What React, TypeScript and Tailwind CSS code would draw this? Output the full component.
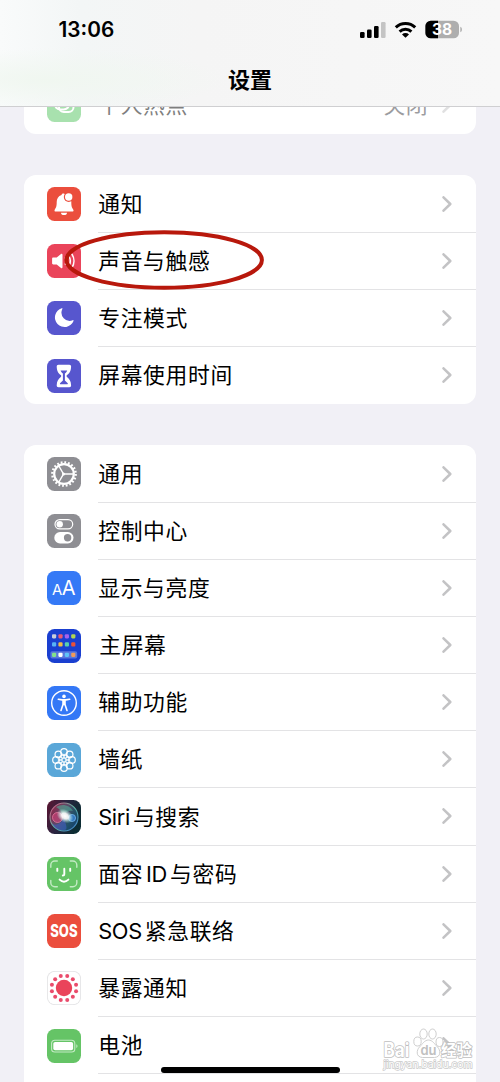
import type { ReactNode } from 'react'
import { clsx } from 'clsx'

interface Item {
  label: ReactNode
  icon: ReactNode
}

interface TileProps {
  bg: string
  children: ReactNode
}

function Tile({ bg, children }: TileProps) {
  return (
    <svg viewBox="0 0 34 34" className="h-[34px] w-[34px] shrink-0">
      <rect width="34" height="34" rx="7.6" fill={bg} />
      {children}
    </svg>
  )
}

const ring = (count: number, radius: number, offset = 0) =>
  Array.from({ length: count }, (_, i) => {
    const a = ((i * 360) / count + offset) * (Math.PI / 180)
    return { x: 17 + radius * Math.cos(a), y: 17 + radius * Math.sin(a) }
  })

const HotspotIcon = () => (
  <Tile bg="#53c45f">
    <g fill="none" stroke="#fff" strokeWidth="2">
      <rect x="7.5" y="9" width="15" height="12.500" rx="6" />
      <rect x="12" y="14" width="14.500" height="10" rx="4.800" />
    </g>
  </Tile>
)

const BellIcon = () => (
  <Tile bg="#eb4e3d">
    <path
      d="M16.3 6.4c-1 0-1.7.6-1.8 1.5-3.2 1-4.8 3.700-4.800 7.200 0 4.500-.6 5.700-1.900 7.300-.6.800-.4 2.100.8 2.100h16.800c1.200 0 1.500-1.300.8-2.100-1.300-1.600-1.900-2.800-1.900-7.300 0-4.400-2.200-6.300-6-7.200-.2-.9-1-1.500-2-1.500Z"
      fill="#fff"
    />
    <path d="M14 25.700h6a3 2.300 0 0 1-6 0Z" fill="#fff" />
    <circle cx="21.7" cy="10" r="4.900" fill="#eb4e3d" />
    <circle cx="21.7" cy="10" r="3.700" fill="#fff" />
  </Tile>
)

const SoundIcon = () => (
  <Tile bg="#ea445a">
    <path
      d="M6.300 13.500h3.400l4.300-3.400c.7-.6 1.500-.2 1.500.7v12.400c0 .9-.8 1.300-1.500.7l-4.300-3.400H6.300c-.8 0-1.200-.5-1.200-1.200v-4.600c0-.7.4-1.200 1.200-1.200Z"
      fill="#fff"
    />
    <g fill="none" stroke="#fff" strokeWidth="1.600" strokeLinecap="round">
      <path d="M18.400 13.900a5.500 5.500 0 0 1 0 6.200" />
      <path d="M21.600 11.900a9 9 0 0 1 0 10.200" />
      <path d="M24.700 9.900a12.500 12.500 0 0 1 0 14.200" />
    </g>
  </Tile>
)

const MoonIcon = () => (
  <Tile bg="#5756ce">
    <path
      d="M15.300 8c.5-.5 0-1-.6-.7A9.600 9.600 0 1 0 26.500 19.900c.2-.7-.3-1-.8-.6A8.300 8.300 0 0 1 15.300 8Z"
      fill="#fff"
    />
  </Tile>
)

const HourglassIcon = () => (
  <Tile bg="#5756ce">
    <path
      d="M11.500 5.800h10.800c1.200 0 1.900.8 1.800 2-.2 4.600-1.800 6.600-4.100 8.300-.6.500-.6 1.500 0 2 2.300 1.700 3.900 3.900 4.100 8.200.1 1.200-.6 2-1.800 2H11.500c-1.200 0-1.900-.8-1.800-2 .2-4.300 1.800-6.500 4.100-8.200.6-.5.6-1.500 0-2-2.300-1.700-3.900-3.700-4.100-8.300-.1-1.200.6-2 1.800-2Z"
      fill="#fff"
    />
    <path
      d="M13.600 11.600h6.600c-.5 1.400-1.300 2.200-2.300 3v7l2.600 2.300c.7.600.3 1.400-.5 1.400h-6.200c-.8 0-1.200-.8-.5-1.400l2.600-2.300v-7c-1-.8-1.800-1.600-2.300-3Z"
      fill="#5756ce"
    />
  </Tile>
)

const GearIcon = () => (
  <Tile bg="#8e8e93">
    <circle cx="17" cy="17" r="11.700" fill="none" stroke="#fff" strokeWidth="2.300" strokeDasharray="1.800 1.875" />
    <circle cx="17" cy="17" r="9.800" fill="none" stroke="#fff" strokeWidth="2.200" />
    <path d="M26 17H16.500M16.500 17l-4.600-8M16.500 17l-4.600 8" stroke="#fff" strokeWidth="1.500" fill="none" />
    <circle cx="16.500" cy="17" r="1.500" fill="#fff" />
  </Tile>
)

const ControlIcon = () => (
  <Tile bg="#8e8e93">
    <rect x="8" y="5.600" width="17.700" height="9.300" rx="4.650" fill="none" stroke="#fff" strokeWidth="1.200" />
    <circle cx="12.700" cy="10.250" r="3.200" fill="#fff" />
    <rect x="7.300" y="18" width="19.200" height="11.400" rx="5.700" fill="#fff" />
    <circle cx="20.600" cy="23.700" r="3.700" fill="#8e8e93" />
  </Tile>
)

const DisplayIcon = () => (
  <Tile bg="#3579f6">
    <g fill="#fff" className="font-['Inter',sans-serif] tracking-normal">
      <text x="5" y="24" fontSize="14.800">A</text>
      <text x="14.800" y="24" fontSize="20">A</text>
    </g>
  </Tile>
)

const APP_DOTS = [
  ['#c9cfdb', '#ec5a72', '#a562ec', '#b3d552'],
  ['#58b3f5', '#f2bc45', '#5bcfae', '#ea5138'],
  ['#83e28a', '#ffffff', '#5fc3f7', '#f19a58'],
]
const DOT_Y = [7.3, 15.4, 25.8]

const HomeIcon = () => (
  <Tile bg="#1a3fd0">
    <rect x="3.400" y="22.300" width="26.800" height="7.200" rx="1.800" fill="#5876dd" />
    {APP_DOTS.map((row, r) =>
      row.map((color, c) => (
        <rect key={`${r}-${c}`} x={5 + c * 6.4} y={DOT_Y[r] - 2.1} width="4.200" height="4.200" rx="1.100" fill={color} />
      )),
    )}
  </Tile>
)

const AccessibilityIcon = () => (
  <Tile bg="#3478f6">
    <circle cx="17" cy="17" r="12.300" fill="none" stroke="#fff" strokeWidth="1.400" />
    <circle cx="17" cy="10.400" r="1.800" fill="#fff" />
    <path
      d="M11.300 13.300 15 13.900h4l3.700-.6M16 14v4.400l-2 6M18 14v4.400l2 6M17 14v4.500"
      fill="none"
      stroke="#fff"
      strokeWidth="1.600"
      strokeLinecap="round"
      strokeLinejoin="round"
    />
  </Tile>
)

const WallpaperIcon = () => (
  <Tile bg="#5aa7d8">
    <g fill="none" stroke="#fff">
      {ring(8, 8).map((p, i) => (
        <circle key={i} cx={p.x} cy={p.y} r="3.300" strokeWidth="1.200" />
      ))}
      {ring(8, 4.3, 22.5).map((p, i) => (
        <circle key={i} cx={p.x} cy={p.y} r="2" strokeWidth=".8" />
      ))}
      <circle cx="17" cy="17" r="2" strokeWidth="1" />
    </g>
  </Tile>
)

const SiriIcon = () => (
  <Tile bg="url(#siri-bg)">
    <defs>
      <linearGradient id="siri-bg" x1="0" y1="0" x2="1" y2=".4">
        <stop offset="0" stopColor="#5c1430" />
        <stop offset=".5" stopColor="#2b2440" />
        <stop offset="1" stopColor="#0c2c33" />
      </linearGradient>
      <linearGradient id="siri-orb" x1="0" y1=".2" x2="1" y2=".8">
        <stop offset="0" stopColor="#8f2347" />
        <stop offset=".4" stopColor="#5d4a68" />
        <stop offset=".7" stopColor="#235268" />
        <stop offset="1" stopColor="#123e6e" />
      </linearGradient>
      <linearGradient id="siri-ring" x1="0" y1="0" x2="1" y2="1">
        <stop offset="0" stopColor="#d9477a" />
        <stop offset=".5" stopColor="#5fb9a2" />
        <stop offset="1" stopColor="#3d79cf" />
      </linearGradient>
      <radialGradient id="siri-glow">
        <stop offset="0" stopColor="#fff" />
        <stop offset=".4" stopColor="#fff" stopOpacity=".9" />
        <stop offset="1" stopColor="#bfe" stopOpacity="0" />
      </radialGradient>
    </defs>
    <circle cx="17" cy="17" r="14" fill="url(#siri-orb)" stroke="url(#siri-ring)" strokeWidth="1.100" />
    <path d="M9 7c6-4 14-2 17 4-5-1-8 2-10 5-1-4-3-7-7-9Z" fill="#4fb59a" opacity=".55" />
    <path d="M5 23c4 4 9 0 12-5 2 7 4 11 1 12-6 1-11-2-13-7Z" fill="#3f5fc9" opacity=".55" />
    <circle cx="10.500" cy="17.500" r="5" fill="#e0407a" fillOpacity=".55" stroke="#ef7fa6" strokeWidth=".7" />
    <circle cx="25" cy="18" r="3.600" fill="#3f8be6" fillOpacity=".7" stroke="#7fc0f5" strokeWidth=".7" />
    <ellipse cx="18" cy="16" rx="9" ry="6.400" fill="url(#siri-glow)" transform="rotate(32 18 16)" />
  </Tile>
)

const FaceIdIcon = () => (
  <Tile bg="#65c466">
    <path
      d="M3.800 10.300V8a4 4 0 0 1 4-4h2.500M23.300 4h2.500a4 4 0 0 1 4 4v2.300M29.800 23.500v2.300a4 4 0 0 1-4 4h-2.500M10.300 29.800H7.800a4 4 0 0 1-4-4v-2.300"
      fill="none"
      stroke="#c4eac5"
      strokeWidth="1.400"
      strokeLinecap="round"
    />
    <path
      d="M10.300 11.600v2.300M23.200 11.600v2.300M17.300 11.800v5.400c0 .9-.5 1.300-1.500 1.300M12.600 22.600c2.700 2.600 6.100 2.600 8.800 0"
      fill="none"
      stroke="#fff"
      strokeWidth="1.900"
      strokeLinecap="round"
    />
  </Tile>
)

const SosIcon = () => (
  <Tile bg="#eb4e3d">
    <text
      x="3.200"
      y="23"
      fontSize="17"
      fill="#fff"
      textLength="27.400"
      lengthAdjust="spacingAndGlyphs"
      className="font-['Inter',sans-serif] font-extrabold tracking-normal"
    >
      SOS
    </text>
  </Tile>
)

const ExposureIcon = () => (
  <Tile bg="#e2e2e4">
    <rect x=".8" y=".8" width="32.400" height="32.400" rx="7" fill="#fff" />
    <circle cx="17" cy="17" r="8.200" fill="#ea445a" />
    {ring(12, 12.5, 15).map((p, i) => (
      <circle key={i} cx={p.x} cy={p.y} r="2" fill="#ea4c6c" />
    ))}
  </Tile>
)

const BatteryIcon = () => (
  <Tile bg="#65c466">
    <rect x="4.600" y="11.200" width="23.200" height="11.800" rx="3.300" fill="none" stroke="#c4eac5" strokeWidth="1.100" />
    <rect x="6.300" y="12.900" width="19.800" height="8.400" rx="1.800" fill="#fff" />
    <path d="M29.300 15.200c1.600.5 1.600 3.300 0 3.800Z" fill="#c4eac5" />
  </Tile>
)

const Latin = ({ children }: { children: string }) => (
  <span className="mr-[3px] tracking-[-0.350px]">{children}</span>
)

const ALERTS: Item[] = [
  { label: '通知', icon: <BellIcon /> },
  { label: '声音与触感', icon: <SoundIcon /> },
  { label: '专注模式', icon: <MoonIcon /> },
  { label: '屏幕使用时间', icon: <HourglassIcon /> },
]

const GENERAL: Item[] = [
  { label: '通用', icon: <GearIcon /> },
  { label: '控制中心', icon: <ControlIcon /> },
  { label: '显示与亮度', icon: <DisplayIcon /> },
  { label: <span className="ml-px">主屏幕</span>, icon: <HomeIcon /> },
  { label: '辅助功能', icon: <AccessibilityIcon /> },
  { label: '墙纸', icon: <WallpaperIcon /> },
  { label: <><Latin>Siri</Latin>与搜索</>, icon: <SiriIcon /> },
  { label: <>面容<span className="ml-[3px]"><Latin>ID</Latin></span>与密码</>, icon: <FaceIdIcon /> },
  { label: <><Latin>SOS</Latin>紧急联络</>, icon: <SosIcon /> },
  { label: '暴露通知', icon: <ExposureIcon /> },
  { label: '电池', icon: <BatteryIcon /> },
]

function Chevron() {
  return (
    <svg viewBox="0 0 10 16" className="h-4 w-2.5 shrink-0">
      <path d="M1.500 1.300 8.300 8l-6.800 6.700" fill="none" stroke="#c3c3c5" strokeWidth="2.500" strokeLinecap="round" strokeLinejoin="round" />
    </svg>
  )
}

interface RowProps {
  item: Item
  last?: boolean
  value?: string
  dimmed?: boolean
}

function Row({ item, last, value, dimmed }: RowProps) {
  return (
    <li className={clsx('flex h-[57.15px] items-center gap-[17px] pl-[23px]', dimmed && 'opacity-50')}>
      {item.icon}
      <div
        className={clsx(
          'flex h-full flex-1 items-center border-b pr-6',
          last ? 'border-transparent' : 'border-[#e3e3e5]',
        )}
      >
        <span className="flex-1 pt-[2px] pl-[0.500px]">{item.label}</span>
        {value && <span className="mr-3.5 pt-[2px] text-[#3c3c43]">{value}</span>}
        <Chevron />
      </div>
    </li>
  )
}

function Group({ items, open }: { items: Item[]; open?: boolean }) {
  return (
    <ul className={clsx('bg-white pt-[0.200px]', open ? 'rounded-t-xl pb-10' : 'rounded-xl')}>
      {items.map((item, i) => (
        <Row key={i} item={item} last={!open && i === items.length - 1} />
      ))}
    </ul>
  )
}

function StatusBar() {
  return (
    <div className="flex h-[60px] items-center justify-between pl-[58.500px] pr-[37px]">
      <span className="text-[20.800px] font-semibold leading-none">13:06</span>
      <svg viewBox="0 0 103 20" className="h-5 w-[103px]">
        <rect x="0" y="12" width="4.600" height="6" rx="1.200" />
        <rect x="7" y="9.500" width="4.600" height="8.500" rx="1.200" />
        <rect x="14" y="6" width="4.600" height="12" rx="1.200" />
        <rect x="21" y="2" width="4.600" height="16" rx="1.200" fill="#c4c4c4" />
        <g fill="none" stroke="#000" strokeWidth="3">
          <path d="M35.800 7.300a14 14 0 0 1 19.400 0" />
          <path d="M39.600 11.600a8.700 8.700 0 0 1 11.800 0" />
        </g>
        <path d="M42 14.400a5.100 5.100 0 0 1 7 0l-3.500 3.400Z" />
        <clipPath id="battery">
          <rect x="65.400" y=".7" width="33.600" height="17.600" rx="5.400" />
        </clipPath>
        <g clipPath="url(#battery)">
          <rect x="65" y="0" width="35" height="20" fill="#aeaeae" />
          <rect x="65" y="0" width="13" height="20" />
        </g>
        <path d="M100.300 6.800c2.200.8 2.200 4.700 0 5.500Z" fill="#aeaeae" />
        <text x="82" y="15" fontSize="15.500" textAnchor="middle" fill="#fff" className="font-bold">38</text>
      </svg>
    </div>
  )
}

function Watermark() {
  return (
    <svg viewBox="0 0 94 50" className="absolute right-[25px] bottom-[10px] h-[50px] w-[94px] tracking-normal">
      <g fill="#fff" fillOpacity=".8" stroke="#c8c8c8" strokeWidth=".9" strokeLinejoin="round">
        <ellipse cx="36.500" cy="19.500" rx="3.700" ry="4.500" />
        <ellipse cx="42.500" cy="12" rx="3.700" ry="5" />
        <ellipse cx="51.500" cy="12" rx="3.700" ry="5" />
        <ellipse cx="58.500" cy="20" rx="3.500" ry="4.500" />
        <path d="M47.500 18c4 0 6 4 9 7s4 10-3 10.500H41.500c-7-.5-6-7.500-3-10.500s5-7 9-7Z" />
      </g>
      <g fill="#fff" stroke="#bebebe" strokeWidth="1.600" paintOrder="stroke" strokeLinejoin="round" className="font-bold">
        <text x="8.500" y="35" fontSize="20" textLength="26" lengthAdjust="spacingAndGlyphs" transform="translate(-6)">Bai</text>
        <text x="60" y="34" fontSize="16" textLength="31" lengthAdjust="spacingAndGlyphs">经验</text>
      </g>
      <text x="47.500" y="33" fontSize="13" textAnchor="middle" fill="#c0c0c0" className="font-semibold">du</text>
      <text x="2.500" y="46" fontSize="10" fill="#fff" stroke="#cacaca" strokeWidth="1.300" paintOrder="stroke" textLength="89" lengthAdjust="spacingAndGlyphs">
        jingyan.baidu.com
      </text>
    </svg>
  )
}

export default function App() {
  return (
    <div className="relative h-[1082px] w-[500px] overflow-hidden bg-[#f1f0f6] font-['Inter','Noto_Sans_CJK_SC',sans-serif] text-[21.800px] leading-none tracking-[0.650px] text-black">
      <main className="flex flex-col gap-[41.300px] px-[23.700px] pt-[76.900px]">
        <ul className="rounded-xl bg-white">
          <Row item={{ label: '个人热点', icon: <HotspotIcon /> }} value="关闭" dimmed last />
        </ul>
        <Group items={ALERTS} />
        <Group items={GENERAL} open />
      </main>

      <header className="absolute inset-x-0 top-0 h-[107px] border-b border-[#cfcfd1] bg-[#f6f6f6] bg-[radial-gradient(ellipse_at_10%_75%,#f0f7f0_0%,transparent_28%),linear-gradient(90deg,#f9fbfb_0%,#f3f6f6_16%,#f5f5f5_40%,#f7f7f7_100%)] tracking-normal">
        <StatusBar />
        <h1 className="pt-[9px] text-center text-[22px] font-semibold leading-[22px]">设置</h1>
      </header>

      {/* highlight around the sound row */}
      <svg viewBox="0 0 202 62" className="absolute left-[64px] top-[229px] h-[62px] w-[202px]">
        <ellipse cx="100.200" cy="31" rx="97.700" ry="27.800" fill="none" stroke="#b8180c" strokeWidth="4" />
      </svg>

      <Watermark />
      <div className="absolute bottom-[9.500px] left-[161px] h-[6px] w-[178.500px] rounded-full bg-black" />
    </div>
  )
}
